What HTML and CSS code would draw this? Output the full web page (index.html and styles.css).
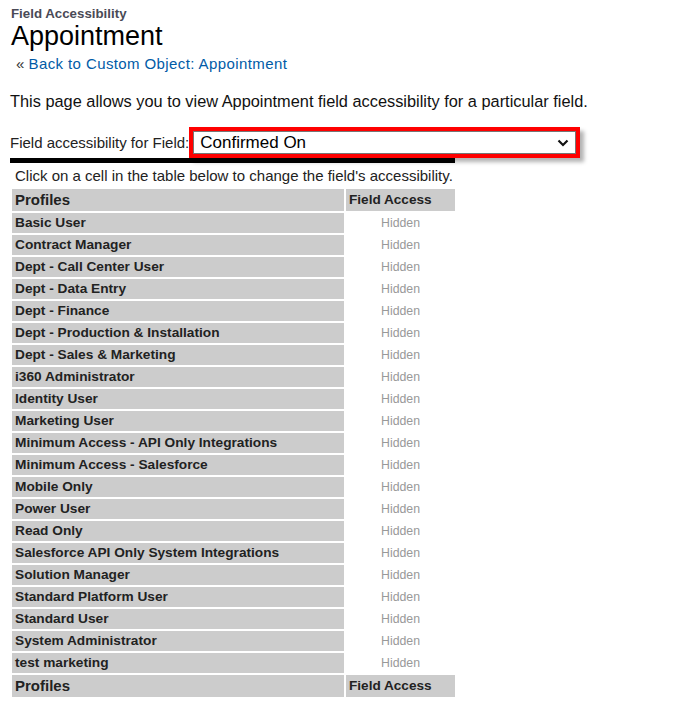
FILE: index.html
```html
<!DOCTYPE html>
<html lang="en">
<head>
    <meta charset="UTF-8">
    <title>Field Accessibility - Appointment</title>
    <link rel="stylesheet" href="styles.css">
</head>
<body>

<div class="page">
    <div class="page-title">
        <h2 class="page-type">Field Accessibility</h2>
        <h1 class="page-name">Appointment</h1>
    </div>
    <div class="crumb">&laquo; <a href="#">Back to Custom Object: Appointment</a></div>

    <p class="intro">This page allows you to view Appointment field accessibility for a particular field.</p>

    <div class="pick-row">
        <label class="pick-label" for="field">Field accessibility for Field:</label>
        <div class="pick-box">
            <div class="fake-select" id="field">
                <span>Confirmed On</span>
                <svg class="chev" width="12" height="8" viewBox="0 0 12 8">
                    <path d="M1.5 1.5 L6 6 L10.5 1.5" fill="none" stroke="#111" stroke-width="2.2"/>
                </svg>
            </div>
        </div>
    </div>

    <div class="access-block">
        <div class="hint">Click on a cell in the table below to change the field's accessibility.</div>
        <table class="access-table">
            <colgroup>
                <col class="col-profile">
                <col class="col-access">
            </colgroup>
            <thead>
                <tr>
                    <th class="th-profile">Profiles</th>
                    <th class="th-access">Field Access</th>
                </tr>
            </thead>
            <tbody id="rows"></tbody>
            <tfoot>
                <tr>
                    <th class="th-profile">Profiles</th>
                    <th class="th-access">Field Access</th>
                </tr>
            </tfoot>
        </table>
    </div>
</div>

<script>
    const profiles = [
        'Basic User', 'Contract Manager', 'Dept - Call Center User', 'Dept - Data Entry',
        'Dept - Finance', 'Dept - Production & Installation', 'Dept - Sales & Marketing',
        'i360 Administrator', 'Identity User', 'Marketing User',
        'Minimum Access - API Only Integrations', 'Minimum Access - Salesforce',
        'Mobile Only', 'Power User', 'Read Only', 'Salesforce API Only System Integrations',
        'Solution Manager', 'Standard Platform User', 'Standard User',
        'System Administrator', 'test marketing'
    ];
    const tbody = document.getElementById('rows');
    profiles.forEach(function (name) {
        const row = tbody.insertRow();
        const a = row.insertCell();
        a.className = 'profile';
        a.textContent = name;
        const b = row.insertCell();
        b.className = 'access';
        b.textContent = 'Hidden';
    });
</script>

</body>
</html>
```

FILE: styles.css
```css
body {
    margin: 0;
    font-family: "Liberation Sans", Arial, sans-serif;
    color: #222;
    background: #fff;
}
.page {
    padding: 6px 0 0 10px;
}
.page-title {
    padding-left: 1px;
}
.page-type {
    margin: 0;
    font-size: 13.3px;
    line-height: 16px;
    font-weight: bold;
    color: #4a4a56;
}
.page-name {
    margin: 0;
    font-size: 27px;
    line-height: 28px;
    font-weight: normal;
    color: #000;
}
.crumb {
    margin: 5px 0 0 6px;
    font-size: 15px;
    line-height: 18px;
    color: #333;
}
.crumb a {
    color: #015ba7;
    text-decoration: none;
    letter-spacing: 0.4px;
}
.intro {
    margin: 19px 0 0 0;
    font-size: 16.35px;
    line-height: 19px;
    color: #111;
}
.pick-row {
    position: relative;
    z-index: 1;
    display: flex;
    align-items: baseline;
    margin-top: 16px;
}
.pick-label {
    font-size: 15px;
    color: #222;
}
.pick-box {
    width: 391px;
    box-sizing: border-box;
    border: 4px solid #f00;
    box-shadow: 4px 4px 4px rgba(0, 0, 0, 0.3);
    background: #fff;
}
.fake-select {
    display: flex;
    align-items: center;
    justify-content: space-between;
    height: 23px;
    box-sizing: border-box;
    border: 1px solid #767676;
    padding: 0 6px 0 6px;
    font-size: 17px;
    line-height: 21px;
    color: #000;
}
.chev {
    display: block;
}
.access-block {
    width: 445px;
    border-top: 5px solid #000;
}
.hint {
    padding: 2px 0 0 5px;
    font-size: 15px;
    line-height: 22px;
    color: #222;
}
.access-table {
    width: 447px;
    table-layout: fixed;
    border-spacing: 2px;
}
.col-profile {
    width: 332px;
}
.col-access {
    width: 109px;
}
.access-table th {
    background-color: #ccc;
    text-align: left;
    padding: 0 3px;
    height: 22px;
    line-height: 22px;
    color: #222;
}
.access-table th.th-profile {
    font-size: 15px;
}
.access-table th.th-access {
    font-size: 13.6px;
}
.access-table td {
    height: 20px;
    padding: 0 3px;
    line-height: 20px;
    white-space: nowrap;
}
.access-table td.profile {
    background-color: #ccc;
    font-weight: bold;
    font-size: 13.7px;
    color: #222;
}
.access-table td.access {
    text-align: center;
    font-size: 12.3px;
    color: #999;
}
```
